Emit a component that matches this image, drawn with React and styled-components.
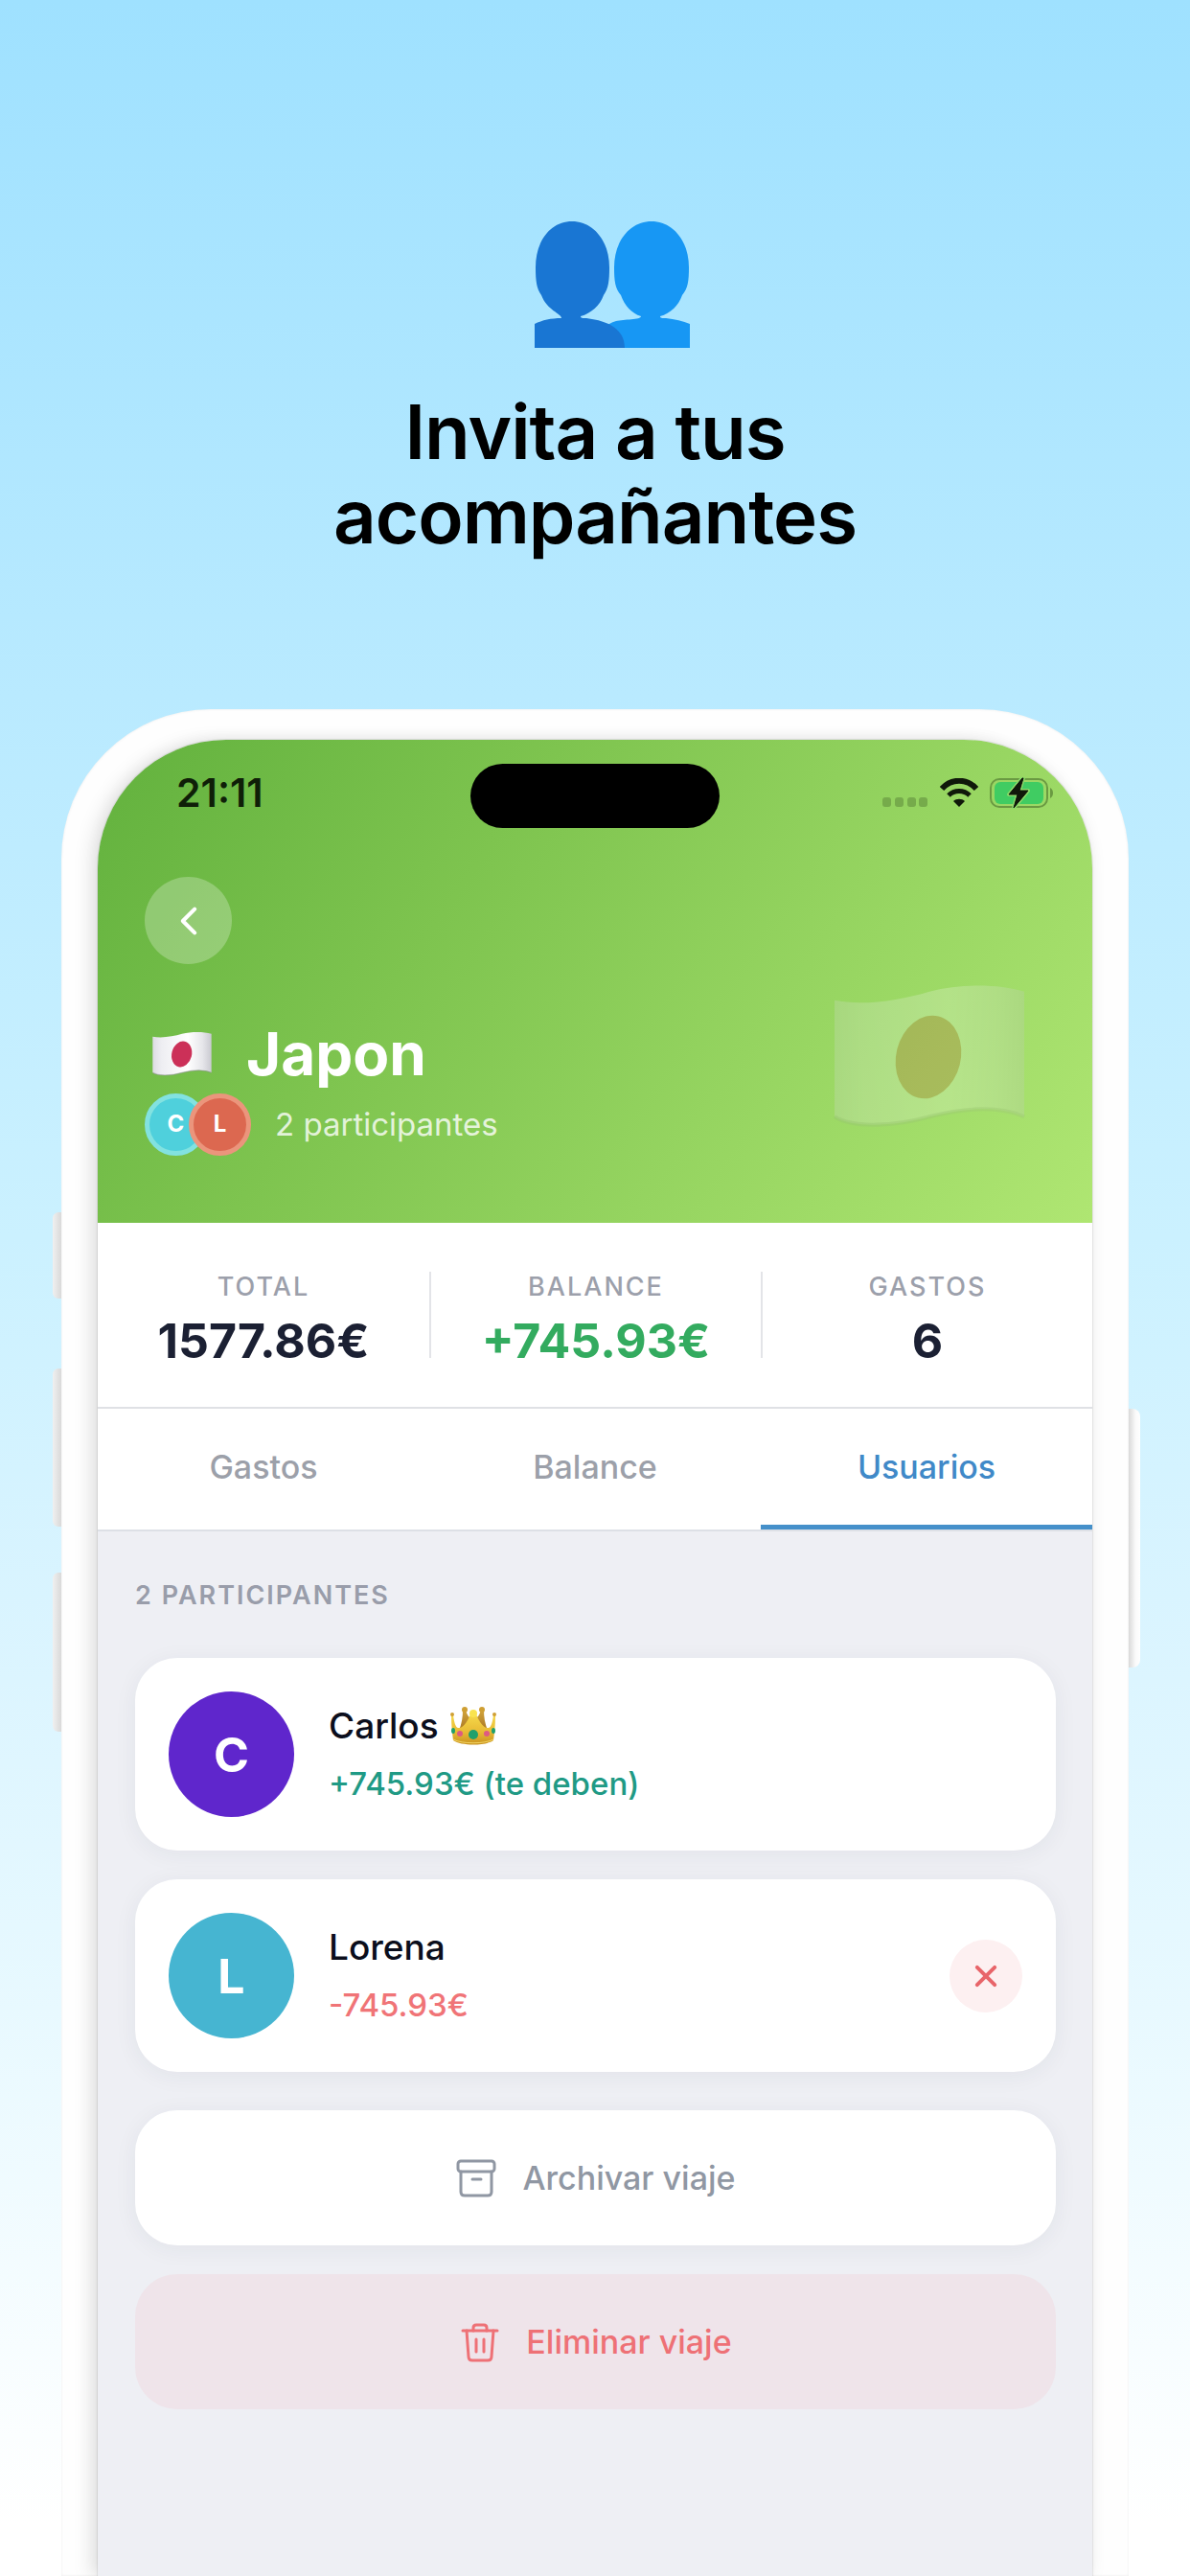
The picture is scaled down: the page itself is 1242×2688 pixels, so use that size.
import React, { useState } from 'react'
import styled, { createGlobalStyle } from 'styled-components'
import { IoChevronBack, IoClose } from 'react-icons/io5'

const GlobalStyle = createGlobalStyle`
  * {
    box-sizing: border-box;
  }
  body {
    margin: 0;
    font-family: Inter, 'Liberation Sans', sans-serif;
    -webkit-font-smoothing: antialiased;
  }
  button {
    padding: 0;
    border: 0;
    background: none;
    font: inherit;
    cursor: pointer;
  }
  h1, h2, h3, p, ul, dl, dd {
    margin: 0;
    padding: 0;
  }
`;

const Page = styled.main`
  display: flex;
  flex-direction: column;
  min-height: 100vh;
  padding: 0 64px;
  overflow: hidden;
  background: linear-gradient(180deg, #9fe1ff 0%, #b9eaff 27%, #cbf1ff 48%, #d9f4ff 62%, #e8f9ff 78%, #ffffff 98%);
`;

const Hero = styled.header`
  display: flex;
  flex-direction: column;
  align-items: center;
  gap: 44px;
  padding: 231px 0 157px;
`;

const PeopleIcon = styled.svg`
  width: 164px;
  height: 132px;
  margin-left: 36px;
`;

const HeroTitle = styled.h1`
  max-width: 640px;
  font-size: 78px;
  font-weight: 600;
  line-height: 88px;
  letter-spacing: -1px;
  text-align: center;
  color: #000;
`;

const Phone = styled.section`
  position: relative;
  flex: 1;
  display: flex;
  padding: 32px 38px 0;
  border-radius: 156px 156px 0 0;
  background: #fefefe;
  box-shadow: inset 0 0 3px rgba(0, 0, 0, 0.08);
`;

const SideButton = styled.span`
  position: absolute;
  top: ${(p) => p.$top}px;
  ${(p) => (p.$side === 'left' ? 'right' : 'left')}: 100%;
  width: ${(p) => (p.$side === 'left' ? 9 : 12)}px;
  height: ${(p) => p.$height}px;
  border-radius: ${(p) => (p.$side === 'left' ? '6px 0 0 6px' : '0 8px 8px 0')};
  background: ${(p) =>
    p.$side === 'left'
      ? 'linear-gradient(90deg, #f0f0f0, #d9d9d9)'
      : 'linear-gradient(90deg, #d9d9d9, #fafafa 60%, #fff)'};
`;

const Screen = styled.div`
  flex: 1;
  min-width: 0;
  overflow: hidden;
  border-radius: 134px 134px 0 0;
  background: #eeeff4;
  box-shadow: 0 0 1px 1px rgba(0, 0, 0, 0.08), -10px 0 18px rgba(0, 0, 0, 0.08), 0 0 16px rgba(0, 0, 0, 0.07);
`;

const TripHeader = styled.div`
  padding-bottom: 70px;
  background: linear-gradient(125deg, #66b440 5%, #7ec44f 35%, #95d460 65%, #afe672 100%);
`;

const StatusBar = styled.div`
  display: grid;
  grid-template-columns: 1fr 260px 1fr;
  padding-top: 25px;
`;

const Clock = styled.time`
  padding-left: 82px;
  font-size: 41px;
  font-weight: 600;
  line-height: 60px;
  color: #0f1f08;
`;

const Island = styled.div`
  height: 67px;
  border-radius: 34px;
  background: #000;
`;

const StatusIcons = styled.div`
  display: flex;
  align-items: center;
  justify-content: flex-end;
  gap: 12px;
  height: 60px;
  padding-right: 40px;
`;

const BackButton = styled.button`
  display: flex;
  align-items: center;
  justify-content: center;
  width: 91px;
  height: 91px;
  margin: 51px 49px 0;
  border-radius: 50%;
  background: rgba(255, 255, 255, 0.25);
  color: #fff;
`;

const TripRow = styled.div`
  display: flex;
  justify-content: space-between;
  padding: 20px 70px 0 49px;
`;

const TripInfo = styled.div`
  padding-top: 34px;
`;

const TripTitle = styled.h2`
  display: flex;
  align-items: center;
  gap: 36px;
  padding-left: 8px;
  font-size: 62px;
  font-weight: 700;
  line-height: 80px;
  color: #fff;
`;

const Participants = styled.div`
  display: flex;
  align-items: center;
  font-size: 33px;
  line-height: 66px;
  color: rgba(255, 255, 255, 0.8);
`;

const MiniAvatar = styled.span`
  display: flex;
  align-items: center;
  justify-content: center;
  width: 65px;
  height: 65px;
  margin-right: ${(p) => (p.$last ? 25 : -19)}px;
  border: 5px solid ${(p) => p.$ring};
  border-radius: 50%;
  background: ${(p) => p.$color};
  font-size: 24px;
  font-weight: 700;
  line-height: 1;
  color: #fff;
`;

const Stats = styled.dl`
  display: grid;
  grid-template-columns: repeat(3, 1fr);
  padding: 51px 0;
  border-bottom: 2px solid #dfe1e5;
  background: #fff;
`;

const Stat = styled.div`
  display: flex;
  flex-direction: column;
  align-items: center;
  gap: 22px;
  & + & {
    border-left: 2px solid #e3e4e8;
  }
`;

const StatLabel = styled.dt`
  font-size: 27px;
  font-weight: 500;
  line-height: 32px;
  letter-spacing: 2px;
  color: #9ca0ab;
`;

const StatValue = styled.dd`
  font-size: 50px;
  font-weight: 700;
  line-height: 36px;
  color: ${(p) => (p.$positive ? '#33ab5f' : '#1b2033')};
`;

const Tabs = styled.nav`
  display: grid;
  grid-template-columns: repeat(3, 1fr);
  border-bottom: 2px solid #dde0e6;
  background: #fff;
`;

const Tab = styled.button`
  height: 126px;
  border-bottom: 5px solid ${(p) => (p.$active ? '#4590ca' : 'transparent')};
  font-size: 34px;
  font-weight: 500;
  color: ${(p) => (p.$active ? '#4089c8' : '#9ca0a9')};
`;

const Content = styled.div`
  padding: 50px 38px 80px 39px;
`;

const SectionTitle = styled.h3`
  margin-bottom: 48px;
  font-size: 27px;
  font-weight: 600;
  line-height: 34px;
  letter-spacing: 2px;
  color: #999daa;
`;

const UserList = styled.ul`
  display: flex;
  flex-direction: column;
  gap: 30px;
  margin-bottom: 40px;
  list-style: none;
`;

const UserCard = styled.li`
  display: flex;
  align-items: center;
  gap: 36px;
  padding: 35px;
  border-radius: 44px;
  background: #fff;
  box-shadow: 0 4px 24px rgba(40, 45, 60, 0.06);
`;

const Avatar = styled.span`
  display: flex;
  align-items: center;
  justify-content: center;
  width: 131px;
  height: 131px;
  border-radius: 50%;
  background: ${(p) => p.$color};
  font-size: 50px;
  font-weight: 700;
  color: #fff;
`;

const UserText = styled.div`
  flex: 1;
`;

const UserName = styled.p`
  display: flex;
  align-items: center;
  gap: 12px;
  font-size: 37px;
  font-weight: 500;
  line-height: 60px;
  color: #0b0e1c;
`;

const UserAmount = styled.p`
  font-size: 33px;
  font-weight: 500;
  line-height: 60px;
  color: ${(p) => (p.$owes ? '#f07477' : '#1f9a85')};
`;

const RemoveButton = styled.button`
  display: flex;
  align-items: center;
  justify-content: center;
  width: 76px;
  height: 76px;
  border-radius: 50%;
  background: #fdf0f1;
  color: #e8656a;
`;

const ActionButton = styled.button`
  display: flex;
  align-items: center;
  justify-content: center;
  gap: 26px;
  width: 100%;
  height: 141px;
  margin-bottom: 30px;
  border-radius: 44px;
  background: ${(p) => (p.$danger ? '#efe4ea' : '#fff')};
  box-shadow: ${(p) => (p.$danger ? 'none' : '0 4px 24px rgba(40, 45, 60, 0.06)')};
  font-size: 34px;
  font-weight: 500;
  color: ${(p) => (p.$danger ? '#ee7176' : '#9097a3')};
`;

const FlagIcon = ({ width, height, faded }) => (
  <svg width={width} height={height} viewBox="0 0 196 150" opacity={faded ? 0.22 : 1} aria-hidden="true">
    <defs>
      <linearGradient id={faded ? 'clothFaded' : 'cloth'}>
        <stop offset="0" stopColor="#dcdce2" />
        <stop offset="0.15" stopColor="#eeeef2" />
        <stop offset="0.6" stopColor="#ffffff" />
        <stop offset="0.85" stopColor="#e6e6ea" />
        <stop offset="1" stopColor="#c9c9d0" />
      </linearGradient>
    </defs>
    <path
      d="M1 17C30 23 68 17 98 8C130 0 168 0 195 8V136C168 124 134 127 98 136C62 146 20 148 1 136Z"
      fill={`url(#${faded ? 'clothFaded' : 'cloth'})`}
    />
    <path
      d="M1 136C20 148 62 146 98 136C134 127 168 124 195 136"
      fill="none"
      stroke="#8b8b94"
      strokeWidth="4"
      opacity="0.5"
    />
    <ellipse cx="97" cy="75" rx="33" ry="43" transform="rotate(14 97 75)" fill={faded ? '#c04a30' : '#cc3058'} />
  </svg>
)

const CrownIcon = () => (
  <svg width="48" height="42" viewBox="0 0 48 42" aria-hidden="true">
    <defs>
      <linearGradient id="gold" x2="0" y2="1">
        <stop offset="0" stopColor="#f7dc4c" />
        <stop offset="0.6" stopColor="#e8bb35" />
        <stop offset="1" stopColor="#c8921f" />
      </linearGradient>
      <linearGradient id="goldBack" x2="0" y2="1">
        <stop offset="0" stopColor="#d3a53c" />
        <stop offset="1" stopColor="#a87522" />
      </linearGradient>
    </defs>
    <path d="M9 26C12 18 13 12 13 4H16C17 9 20 13 24 15C28 13 31 9 32 4H35C35 12 36 18 39 26Z" fill="url(#goldBack)" />
    <path
      d="M1 10H3C4 16 5 22 8 23C14 24 19 14 22 7H26C29 14 34 24 40 23C43 22 44 16 45 10H47C47 20 46 28 45 36C37 42 11 42 3 36C2 28 1 20 1 10Z"
      fill="url(#gold)"
    />
    <path d="M3 35C12 40 36 40 45 35" fill="none" stroke="#f2d565" strokeWidth="1" />
    <circle cx="2" cy="9" r="2" fill="#cf9f33" />
    <circle cx="46" cy="9" r="2" fill="#cf9f33" />
    <circle cx="15" cy="4" r="3" fill="#cf9f33" />
    <circle cx="33" cy="4" r="3" fill="#cf9f33" />
    <circle cx="24" cy="8" r="4" fill="#f9e34f" />
    <circle cx="24" cy="30" r="5" fill="#1fa06c" />
    <circle cx="10" cy="29" r="3" fill="#dd5a83" />
    <circle cx="38" cy="29" r="3" fill="#dd5a83" />
    <ellipse cx="3" cy="26" rx="2" ry="3" fill="#1fa06c" />
    <ellipse cx="45" cy="26" rx="2" ry="3" fill="#1fa06c" />
  </svg>
)

const ArchiveIcon = () => (
  <svg
    width="44"
    height="44"
    viewBox="0 0 44 44"
    fill="none"
    stroke="currentColor"
    strokeWidth="3"
    strokeLinecap="round"
    strokeLinejoin="round"
    aria-hidden="true"
  >
    <rect x="3" y="4" width="38" height="11" rx="3" />
    <path d="M6 15V36Q6 40 10 40H34Q38 40 38 36V15" />
    <path d="M18 23H27" />
  </svg>
)

const TrashIcon = () => (
  <svg
    width="44"
    height="44"
    viewBox="0 0 44 44"
    fill="none"
    stroke="currentColor"
    strokeWidth="3"
    strokeLinecap="round"
    strokeLinejoin="round"
    aria-hidden="true"
  >
    <path d="M4 10H40" />
    <path d="M15 10V7Q15 4 18 4H26Q29 4 29 7V10" />
    <path d="M8 10L10 37Q10 41 14 41H30Q34 41 34 37L36 10" />
    <path d="M18 19V32M26 19V32" />
  </svg>
)

const SignalIcon = styled.svg`
  align-self: flex-end;
  margin-bottom: 15px;
`;

const SignalDots = () => (
  <SignalIcon width="48" height="10" viewBox="0 0 48 10" aria-hidden="true">
    {[0, 13, 26, 38].map((x) => (
      <rect key={x} x={x} width="9" height="10" rx="3" fill="#76ab4b" />
    ))}
  </SignalIcon>
)

const WifiIcon = () => (
  <svg width="40" height="30" viewBox="0 0 40 30" aria-hidden="true">
    <path d="M2 11C12 0 28 0 38 11" fill="none" stroke="#10180a" strokeWidth="6" />
    <path d="M9 18C15 12 25 12 31 18" fill="none" stroke="#10180a" strokeWidth="5" />
    <path d="M14 24C17 21 23 21 26 24L20 30Z" fill="#10180a" />
  </svg>
)

const BatteryIcon = () => (
  <svg width="67" height="33" viewBox="0 0 67 33" aria-hidden="true">
    <rect x="1" y="2" width="59" height="29" rx="9" fill="none" stroke="#6a9a42" strokeWidth="2" />
    <rect x="5" y="5" width="51" height="23" rx="6" fill="#40cc62" />
    <path d="M63 11C67 13 67 20 63 22Z" fill="#6a9a42" />
    <path
      d="M34 1L20 18H29L25 32L40 14H31L35 1Z"
      fill="#10180a"
      stroke="#8ad968"
      strokeWidth="4"
      strokeLinejoin="round"
      paintOrder="stroke"
    />
    <path d="M34 1L20 18H29L25 32L40 14H31L35 1Z" fill="#10180a" stroke="#10180a" strokeLinejoin="round" />
  </svg>
)

const TABS = ['Gastos', 'Balance', 'Usuarios']

const USERS = [
  { name: 'Carlos', color: '#5f26cc', amount: '+745.93€ (te deben)', owner: true },
  { name: 'Lorena', color: '#46b5d1', amount: '-745.93€', owes: true },
]

export default function App() {

  const [activeTab, setActiveTab] = useState('Usuarios')

  return (
    <Page>
      <GlobalStyle />
      <Hero>
        <PeopleIcon viewBox="0 0 164 132" aria-hidden="true">
          <path
            d="M123 0C145 0 162 20 162 48C162 62 161 70 155 77C151 88 143 96 132 99C132 101 134 101 138 101C147 102 156 104 163 107V132H66V125C68 114 76 107 86 104C94 102 112 103 112 99C102 96 95 88 91 77C85 70 84 62 84 48C84 20 101 0 123 0Z"
            fill="#1797f4"
          />
          <path
            d="M40 0C62 0 79 20 79 48C79 62 78 70 73 77C69 88 60 96 49 99C49 101 51 101 55 101C79 104 95 113 95 132H1V107C9 103 18 101 29 101C29 96 14 93 8 77C3 70 2 62 2 48C2 20 18 0 40 0Z"
            fill="#1976d3"
          />
        </PeopleIcon>
        <HeroTitle>
          Invita a tus
          <br />
          acompañantes
        </HeroTitle>
      </Hero>

      <Phone>
        <SideButton $side="left" $top={525} $height={90} />
        <SideButton $side="left" $top={688} $height={165} />
        <SideButton $side="left" $top={901} $height={166} />
        <SideButton $side="right" $top={730} $height={270} />

        <Screen>
          <TripHeader>
            <StatusBar>
              <Clock>21:11</Clock>
              <Island />
              <StatusIcons>
                <SignalDots />
                <WifiIcon />
                <BatteryIcon />
              </StatusIcons>
            </StatusBar>

            <BackButton type="button" aria-label="Volver">
              <IoChevronBack size={44} />
            </BackButton>

            <TripRow>
              <TripInfo>
                <TripTitle>
                  <FlagIcon width={62} height={48} />
                  Japon
                </TripTitle>
                <Participants>
                  <MiniAvatar $color="#4fd0dc" $ring="#82e2e0">C</MiniAvatar>
                  <MiniAvatar $color="#dc6850" $ring="#eb957c" $last>L</MiniAvatar>
                  2 participantes
                </Participants>
              </TripInfo>
              <FlagIcon width={200} height={154} faded />
            </TripRow>
          </TripHeader>

          <Stats>
            <Stat>
              <StatLabel>TOTAL</StatLabel>
              <StatValue>1577.86€</StatValue>
            </Stat>
            <Stat>
              <StatLabel>BALANCE</StatLabel>
              <StatValue $positive>+745.93€</StatValue>
            </Stat>
            <Stat>
              <StatLabel>GASTOS</StatLabel>
              <StatValue>6</StatValue>
            </Stat>
          </Stats>

          <Tabs>
            {TABS.map((tab) => (
              <Tab key={tab} type="button" $active={tab === activeTab} onClick={() => setActiveTab(tab)}>
                {tab}
              </Tab>
            ))}
          </Tabs>

          <Content>
            <SectionTitle>2 PARTICIPANTES</SectionTitle>
            <UserList>
              {USERS.map((user) => (
                <UserCard key={user.name}>
                  <Avatar $color={user.color}>{user.name[0]}</Avatar>
                  <UserText>
                    <UserName>
                      {user.name}
                      {user.owner && <CrownIcon />}
                    </UserName>
                    <UserAmount $owes={user.owes}>{user.amount}</UserAmount>
                  </UserText>
                  {!user.owner && (
                    <RemoveButton type="button" aria-label={`Quitar a ${user.name}`}>
                      <IoClose size={42} />
                    </RemoveButton>
                  )}
                </UserCard>
              ))}
            </UserList>
            <ActionButton type="button">
              <ArchiveIcon />
              Archivar viaje
            </ActionButton>
            <ActionButton type="button" $danger>
              <TrashIcon />
              Eliminar viaje
            </ActionButton>
          </Content>
        </Screen>
      </Phone>
    </Page>
  )
}
